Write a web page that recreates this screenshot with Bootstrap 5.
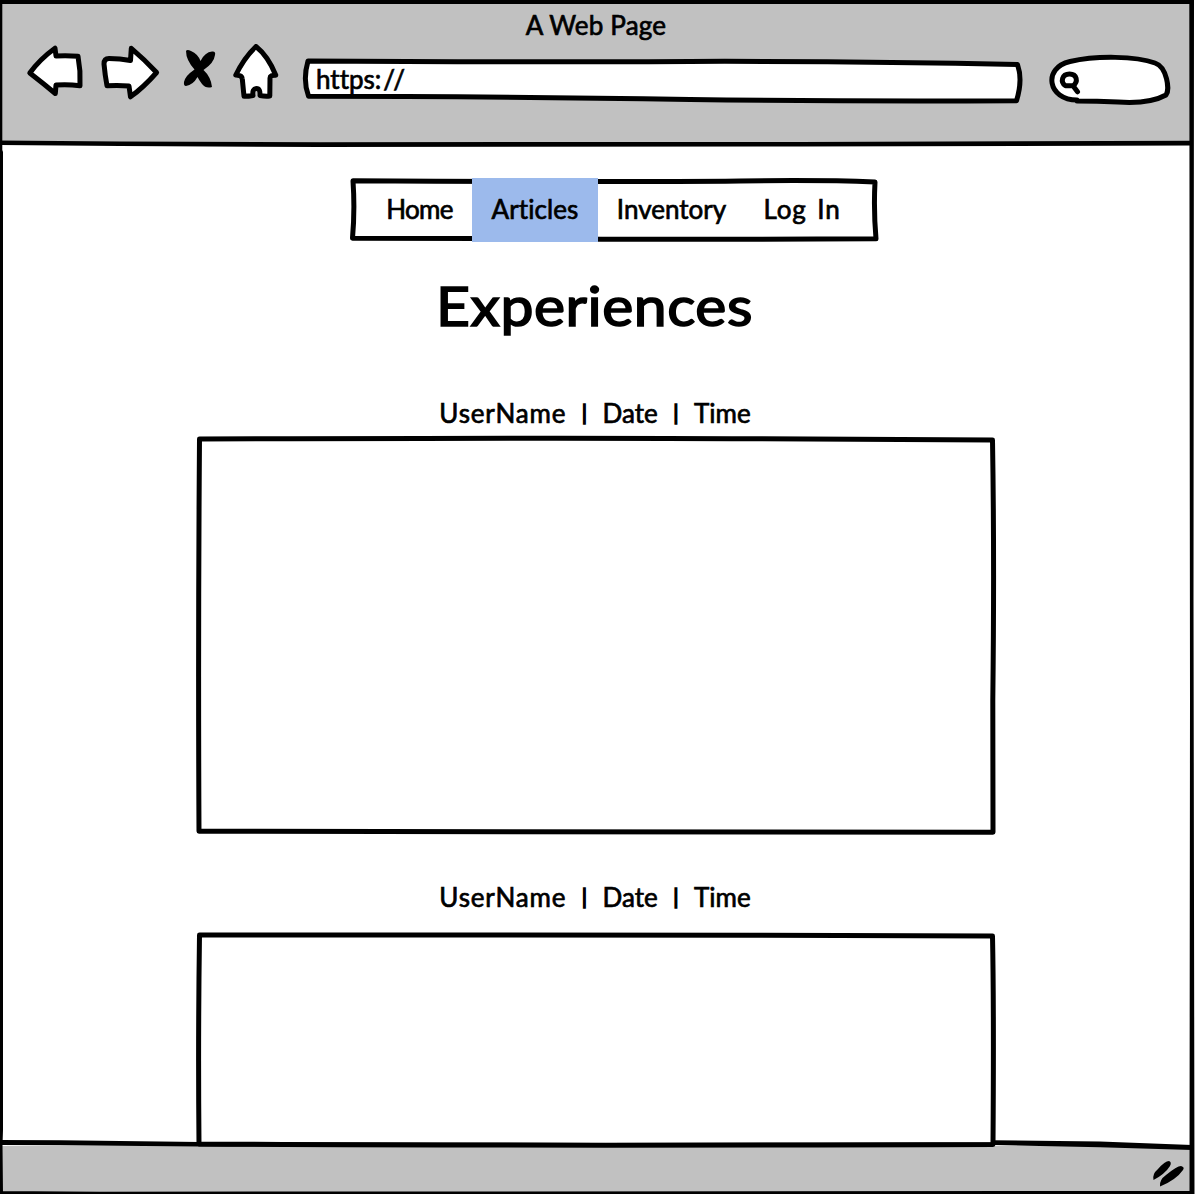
<!DOCTYPE html>
<html lang="en">
<head>
<meta charset="utf-8">
<meta name="viewport" content="width=device-width, initial-scale=1">
<title>A Web Page</title>
<link href="https://cdn.jsdelivr.net/npm/bootstrap@5.3.0/dist/css/bootstrap.min.css" rel="stylesheet">
<style>
  body { font-family: Lato, "Open Sans", sans-serif; font-size: 26px; line-height: 32px; color: #000; font-weight: 400; font-variant-ligatures: none; -webkit-text-stroke: .7px #000; background: #fff; }
  .window { width: 1196px; height: 1194px; }
  .ink { fill: none; stroke: #000; stroke-width: 5; stroke-linejoin: round; stroke-linecap: round; }
  .paper { fill: #fff; }
  .outline { left: 0; top: 0; width: 100%; height: 100%; overflow: visible; pointer-events: none; }
  .topbar { height: 144px; background: #c1c1c1; padding: 9px 24px 0 26px; }
  .window-title { height: 35px; width: 1140px; }
  .toolbar-icons { height: 62px; }
  .address { width: 724px; margin-left: 20px; }
  .address-text { padding: 19px 0 0 16px; }
  .search { width: 124px; margin-left: 24px; }
  .g-forward { margin-left: 16px; } .g-stop { margin-left: 22px; } .g-home { margin-left: 14px; }
  .site-nav { width: 528px; height: 64px; margin: 34px 0 0 350px; padding-left: 18px; }
  .site-nav .nav-link { color: #000; padding: 0 0 2px; height: 64px; }
  .w-home { width: 103px; margin-right: 1px; } .w-articles { width: 126px; } .w-inventory { width: 147px; } .w-login { width: 114px; }
  .site-nav .active { background: #9cbaec; }
  .page-title { font-size: 54px; line-height: 64px; font-weight: 400; margin: 32px 0 0; -webkit-text-stroke: 1.6px #000; width: 1189px; letter-spacing: .5px; transform: scaleX(1.09); }
  .byline { width: 1190px; height: 32px; gap: 15.5px; }
  .divider { font-size: 21px; line-height: 29px; -webkit-text-stroke: 1.5px #000; }
  .first { margin-top: 59px; }
  .second { margin-top: 47px; }
  .post { width: 797px; margin-left: 198px; }
  .post-a { height: 397px; margin-top: 8px; }
  .post-b { height: 212px; margin-top: 21px; }
  .statusbar { height: 51px; background: #c1c1c1; padding: 12px 8px 0 0; }
  .t-title { letter-spacing: .2px; }
  .t-slashes { letter-spacing: 4px; margin-left: 2px; }
  .t-home { letter-spacing: -.7px; }
  .t-art { letter-spacing: .1px; }
  .t-log { letter-spacing: .9px; word-spacing: 3px; }
  .t-user { letter-spacing: .85px; }
</style>
<script src="https://cdn.jsdelivr.net/npm/bootstrap@5.3.0/dist/js/bootstrap.bundle.min.js"></script>
</head>
<body>
<div class="window position-relative overflow-hidden d-flex flex-column">
  <header class="topbar flex-shrink-0">
    <div class="window-title text-center"><span class="t-title">A Web Page</span></div>
    <div class="toolbar-icons d-flex">
      <svg width="58" height="62" viewBox="26 44 58 62"><path class="ink paper" d="M29.800 73Q40 59 55 48.200L56 56Q67 55.500 78 56.200Q80.800 71 80 85.800Q68 84 56 85L55.300 93.500Q44 84 29.800 73Z"/></svg>
      <svg class="g-forward" width="60" height="62" viewBox="100 44 60 62"><path class="ink paper" d="M104 64Q104 58.500 109 58.500Q120 58.500 130.500 60.500L131.300 48.300Q144 59 156.600 72.500Q144 87 130.500 96.800L129 86Q118 85 107 85.800Q105 75 104 64Z"/></svg>
      <svg class="g-stop" width="36" height="62" viewBox="182 44 36 62"><path d="M186 51Q187 49 191 51Q198 54 200.500 61Q205 52 212 51.500Q216 51 215 55Q214 63 203.500 70Q211 77 212 87Q206 89 202 84Q199 80 197.500 77Q193 85 186 86Q183.500 86 184 82Q185 76 194.500 69.500Q186 60 186 51Z"/></svg>
      <svg class="g-home" width="48" height="62" viewBox="232 44 48 62"><path class="ink paper" d="M256 46.500Q244 58 235.800 75Q242 75 242.300 79L244 96.300Q249 96.300 253 95.500Q252 88.500 256.500 88.500Q260.500 88.500 260 95.500Q265 96.500 269.800 96L270 78Q270 75 275.800 75.200Q268 56 256 46.500Z"/></svg>
      <div class="address position-relative">
        <svg class="outline position-absolute" viewBox="300 44 724 62"><path class="ink paper" d="M308 61Q480 62.200 690 61.400Q860 61 1017.500 64.500Q1023 80 1016.500 100.700Q840 101.500 690 99.500Q480 96.200 308.500 96.200Q302.500 80 308 61Z"/></svg>
        <div class="address-text position-relative"><span>https:</span><span class="t-slashes">//</span></div>
      </div>
      <div class="search">
        <svg width="124" height="62" viewBox="1048 44 124 62"><path class="ink paper" d="M1077 100C1048 100 1042 68 1070 61.500C1096 55.500 1136 56 1155 63C1167 67 1170 90 1166 95C1157 100 1140 103.500 1118 102C1103 101.300 1090 101 1077 101"/><path class="ink" d="M1073 85.800H1065.500C1060 82 1062 74 1069.500 74C1077 74 1078.500 82 1073 85.800L1077.500 91.800"/></svg>
      </div>
    </div>
  </header>

  <main class="flex-grow-1">
    <nav class="site-nav nav position-relative flex-nowrap">
      <svg class="outline position-absolute" viewBox="350 178 528 64"><path class="ink" d="M353 180.800Q620 182.300 740 181Q820 179.800 875 182Q873.500 210 876 238.800Q610 239.800 480 238.500L352.500 238.200Q355 210 353 180.800Z"/></svg>
      <a class="nav-link w-home d-flex align-items-center justify-content-center position-relative" href="#"><span class="t-home">Home</span></a>
      <a class="nav-link active w-articles d-flex align-items-center justify-content-center position-relative" href="#"><span class="t-art">Articles</span></a>
      <a class="nav-link w-inventory d-flex align-items-center justify-content-center position-relative" href="#"><span class="t-inv">Inventory</span></a>
      <a class="nav-link w-login d-flex align-items-center justify-content-center position-relative" href="#"><span class="t-log">Log In</span></a>
    </nav>
    <h1 class="page-title text-center">Experiences</h1>
    <div class="byline first d-flex justify-content-center"><span class="t-user">UserName</span><span class="divider">|</span><span>Date</span><span class="divider">|</span><span class="t-time">Time</span></div>
    <article class="post post-a position-relative">
      <svg class="outline position-absolute" viewBox="198 437 797 397"><path class="ink" d="M199.500 439Q600 437.500 750 438.800L992.500 440Q994.500 560 992.800 700L993 832.300Q500 833 199 831.300Q198 640 199.500 439Z"/></svg>
    </article>
    <div class="byline second d-flex justify-content-center"><span class="t-user">UserName</span><span class="divider">|</span><span>Date</span><span class="divider">|</span><span class="t-time">Time</span></div>
    <article class="post post-b position-relative">
      <svg class="outline position-absolute" viewBox="198 934 797 212"><path class="ink" d="M199.500 935Q600 934.500 750 935.200L992.500 936Q994 1010 993 1144.500Q500 1146 199 1144Q198 1040 199.500 935Z"/></svg>
    </article>
  </main>

  <footer class="statusbar flex-shrink-0 d-flex justify-content-end align-items-start">
    <svg width="36" height="34" viewBox="1152 1157 36 34"><path d="M1153.500 1179Q1152 1173 1158 1168Q1165 1160 1169 1160Q1172 1161 1170 1165Q1165 1173 1153.500 1179ZM1160 1185.500Q1159 1179 1166 1174Q1177 1165 1181 1165Q1185 1166 1183 1169Q1176 1179 1160 1185.500Z"/></svg>
  </footer>

  <svg class="outline position-absolute" viewBox="0 0 1196 1194">
    <path fill="#fff" d="M1192 0H1196V1194H1192ZM1000 1138V1142L1189 1147V1138Z"/>
    <path d="M0 0H1194V4H0ZM0 0H2.300V150L3 152V1130L2.500 1145L3 1194H0ZM1189.300 0H1194L1193.500 600L1194.500 1194H1189.500L1190 700ZM0 1191L100 1191.700L1190 1191V1194H0Z"/>
    <path d="M0 140.500L120 141.500L320 142.200L800 142L1192 140.800V145.500L800 146.500L320 147L120 146L0 145ZM0 1140L60 1140.300L200 1142L600 1143L993 1142.500V1140.300L1100 1141.500L1192 1145V1150L1100 1147.200L993 1145V1147H600L200 1146.500L60 1145.200L0 1145Z"/>
  </svg>
</div>
</body>
</html>
